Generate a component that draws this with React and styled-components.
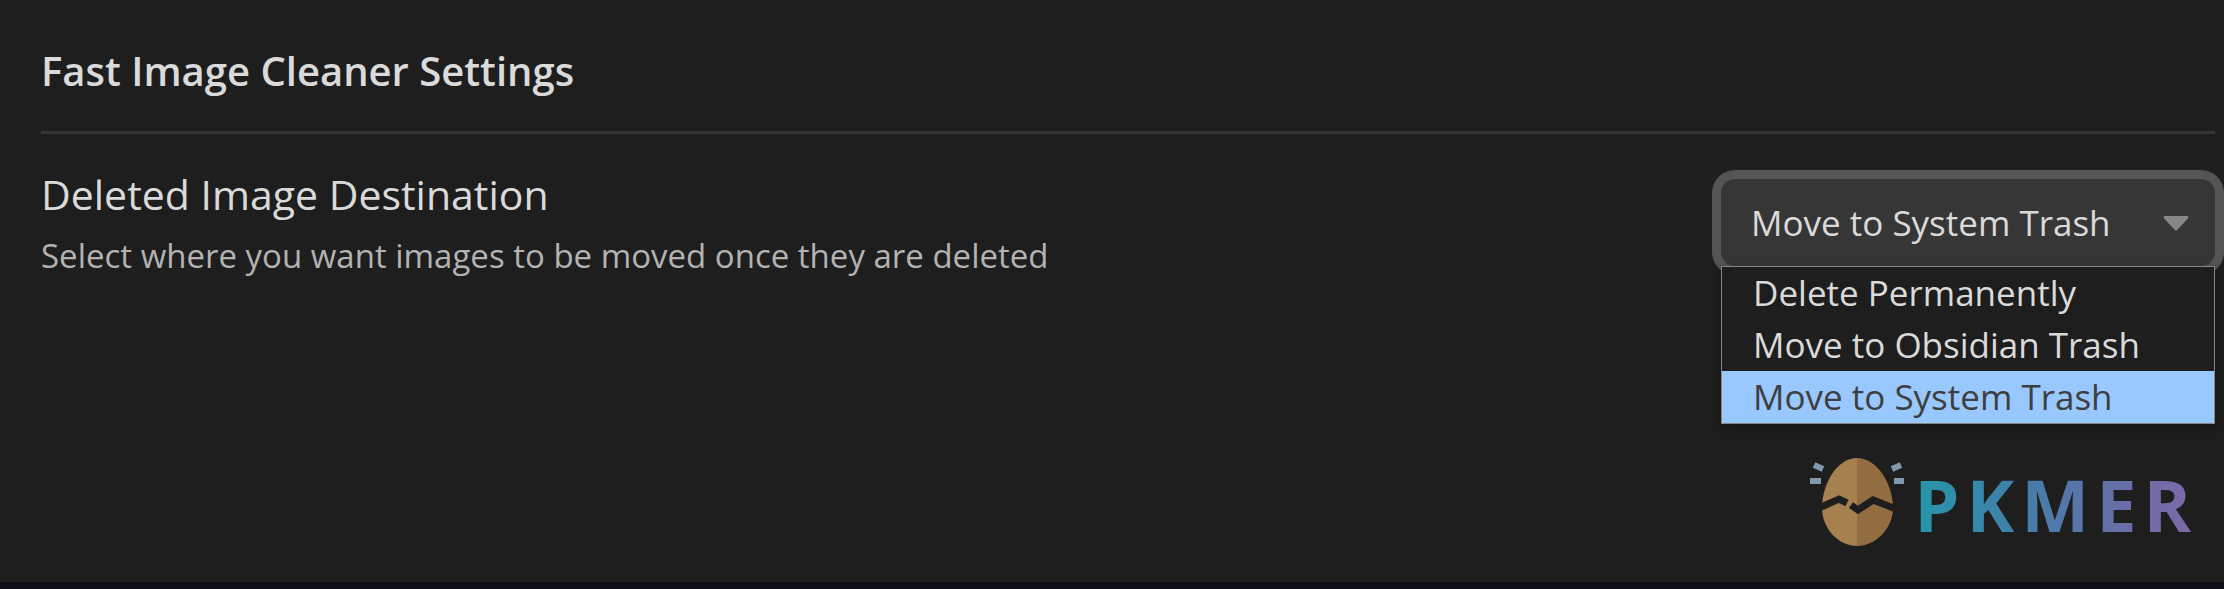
import React, { useId, useState } from "react";
import styled, { createGlobalStyle } from "styled-components";

const GlobalStyle = createGlobalStyle`
  *, *::before, *::after { box-sizing: border-box; }
  body {
    margin: 0;
    background: #1e1e1e;
    color: #dadada;
    font-family: "Open Sans", "Noto Sans", sans-serif;
  }
`;

const Page = styled.div`
  min-height: 100vh;
  display: flex;
  flex-direction: column;
`;

const Panel = styled.main`
  flex: 1;
  padding: 43px 9px 0 41px;
`;

const Heading = styled.h1`
  margin: 0;
  padding-bottom: 32px;
  border-bottom: 3px solid #353535;
  font-size: 40px;
  line-height: 56px;
  font-weight: 600;
`;

const Setting = styled.section`
  display: flex;
  justify-content: space-between;
  align-items: flex-start;
  padding-top: 32px;
`;

const Info = styled.div`
  min-width: 0;
`;

const Name = styled.label`
  display: block;
  font-size: 41px;
  line-height: 56px;
`;

const Description = styled.p`
  margin: 10px 0 0;
  color: #b3b3b3;
  font-size: 33px;
  line-height: 48px;
`;

const Dropdown = styled.div`
  position: relative;
  flex: none;
  width: 494px;
  margin-top: 13px;
`;

const Select = styled.select`
  appearance: none;
  display: block;
  width: 100%;
  height: 87px;
  padding: 0 72px 0 30px;
  border: 0;
  border-radius: 14px;
  outline: none;
  background: #363636;
  box-shadow: 0 0 0 9px #555555;
  color: #dadada;
  font: inherit;
  font-size: 35px;
`;

const Arrow = styled.svg`
  position: absolute;
  top: 37px;
  right: 26px;
  width: 26px;
  height: 15px;
  pointer-events: none;
`;

const Menu = styled.ul`
  position: absolute;
  top: 100%;
  left: 0;
  right: 0;
  margin: 0;
  padding: 0;
  list-style: none;
  border: 1px solid #858585;
  background: #1e1e1e;
  box-shadow: 0 4px 12px rgba(0, 0, 0, 0.3);
`;

const Option = styled.li`
  padding-left: 31px;
  background: ${(p) => (p["aria-selected"] ? "#99c8ff" : "transparent")};
  color: ${(p) => (p["aria-selected"] ? "#3f3f3f" : "#dadada")};
  font-size: 35px;
  line-height: 52px;
  cursor: default;
`;

const Footer = styled.footer`
  display: flex;
  justify-content: flex-end;
  padding: 0 26px 29px 0;
  border-bottom: 7px solid #0d1117;
`;

const Brand = styled.div`
  display: flex;
  align-items: flex-start;
  gap: 8px;
`;

const Egg = styled.svg`
  width: 98px;
  height: 92px;
`;

const Wordmark = styled.span`
  font-size: 72px;
  line-height: 98px;
  font-weight: 700;
  letter-spacing: 7px;
  color: transparent;
  background: linear-gradient(90deg, #2797aa, #3a84a8 28%, #5078aa 50%, #666fa8 72%, #8068a8);
  background-clip: text;
`;

const destinations = [
  "Delete Permanently",
  "Move to Obsidian Trash",
  "Move to System Trash",
];

function EggLogo() {
  return (
    <Egg viewBox="0 0 98 92" aria-hidden="true">
      <path d="M49 3C29 3 14 29 14 53C14 74 31 91 49 91Z" fill="#a6804e" />
      <path d="M49 3C69 3 85 29 85 53C85 74 67 91 49 91Z" fill="#936c42" />
      <path
        d="M11 53L31 44L39 48M43 50L50 55L65 45L88 54"
        fill="none"
        stroke="#1e1e1e"
        strokeWidth="7"
      />
      <path
        d="M6 10L15 14M2 26H13M93 10L84 14M86 26H96"
        fill="none"
        stroke="#8298ad"
        strokeWidth="6"
      />
    </Egg>
  );
}

export default function App() {
  const [value, setValue] = useState("Move to System Trash");
  const id = useId();
  return (
    <Page>
      <GlobalStyle />
      <Panel>
        <Heading>Fast Image Cleaner Settings</Heading>
        <Setting>
          <Info>
            <Name htmlFor={id}>Deleted Image Destination</Name>
            <Description>
              Select where you want images to be moved once they are deleted
            </Description>
          </Info>
          <Dropdown>
            <Select id={id} value={value} onChange={(e) => setValue(e.target.value)}>
              {destinations.map((d) => (
                <option key={d}>{d}</option>
              ))}
            </Select>
            <Arrow viewBox="0 0 26 15" aria-hidden="true">
              <path d="M1.5 0H24.5Q26 1 25 2.5L14 14Q13 15 12 14L1 2.5Q0 1 1.5 0Z" fill="#888888" />
            </Arrow>
            <Menu role="listbox" aria-label="Deleted Image Destination">
              {destinations.map((d) => (
                <Option key={d} role="option" aria-selected={d === value} onClick={() => setValue(d)}>
                  {d}
                </Option>
              ))}
            </Menu>
          </Dropdown>
        </Setting>
      </Panel>
      <Footer>
        <Brand>
          <EggLogo />
          <Wordmark>PKMER</Wordmark>
        </Brand>
      </Footer>
    </Page>
  );
}
